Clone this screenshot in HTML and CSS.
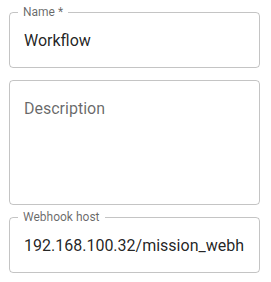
FILE: index.html
```html
<!DOCTYPE html>
<html lang="en">

<head>
    <meta charset="UTF-8">
    <meta name="viewport" content="width=device-width, initial-scale=1.0">
    <title>Workflow</title>
    <link rel="stylesheet" href="styles.css">
</head>

<body>

    <form class="form">
        <fieldset class="field">
            <legend class="field-label">Name *</legend>
            <input class="field-input" type="text" value="Workflow">
        </fieldset>
        <fieldset class="field">
            <legend class="field-label field-label-empty"></legend>
            <textarea class="field-input field-area" rows="4" placeholder="Description"></textarea>
        </fieldset>
        <fieldset class="field">
            <legend class="field-label">Webhook host</legend>
            <input class="field-input" type="text" value="192.168.100.32/mission_webh">
        </fieldset>
    </form>

</body>

</html>
```

FILE: styles.css
```css
* {
    margin: 0;
    padding: 0;
    box-sizing: border-box;
}

body {
    font-family: Roboto, "Liberation Sans", sans-serif;
    background: #fff;
}

.form {
    width: 260px;
    padding: 6px 0 0 9px;
    display: flex;
    flex-direction: column;
    gap: 6px;
}

.field {
    border: 1px solid rgba(0, 0, 0, 0.23);
    border-radius: 4px;
    min-width: 0;
}

.field-label {
    margin-left: 8px;
    padding: 0 5px;
    height: 12px;
    font-size: 12px;
    line-height: 12px;
    color: rgba(0, 0, 0, 0.6);
}

.field-label-empty {
    padding: 0;
}

.field-input {
    display: block;
    width: 100%;
    border: 0;
    outline: 0;
    background: transparent;
    font-family: inherit;
    font-size: 16px;
    line-height: 23px;
    height: 49px;
    padding: 11px 14px 15px;
    color: rgba(0, 0, 0, 0.87);
}

.field-area {
    height: 118px;
    resize: none;
    overflow: hidden;
}

.field-area::placeholder {
    color: rgba(0, 0, 0, 0.6);
    opacity: 1;
}
```
